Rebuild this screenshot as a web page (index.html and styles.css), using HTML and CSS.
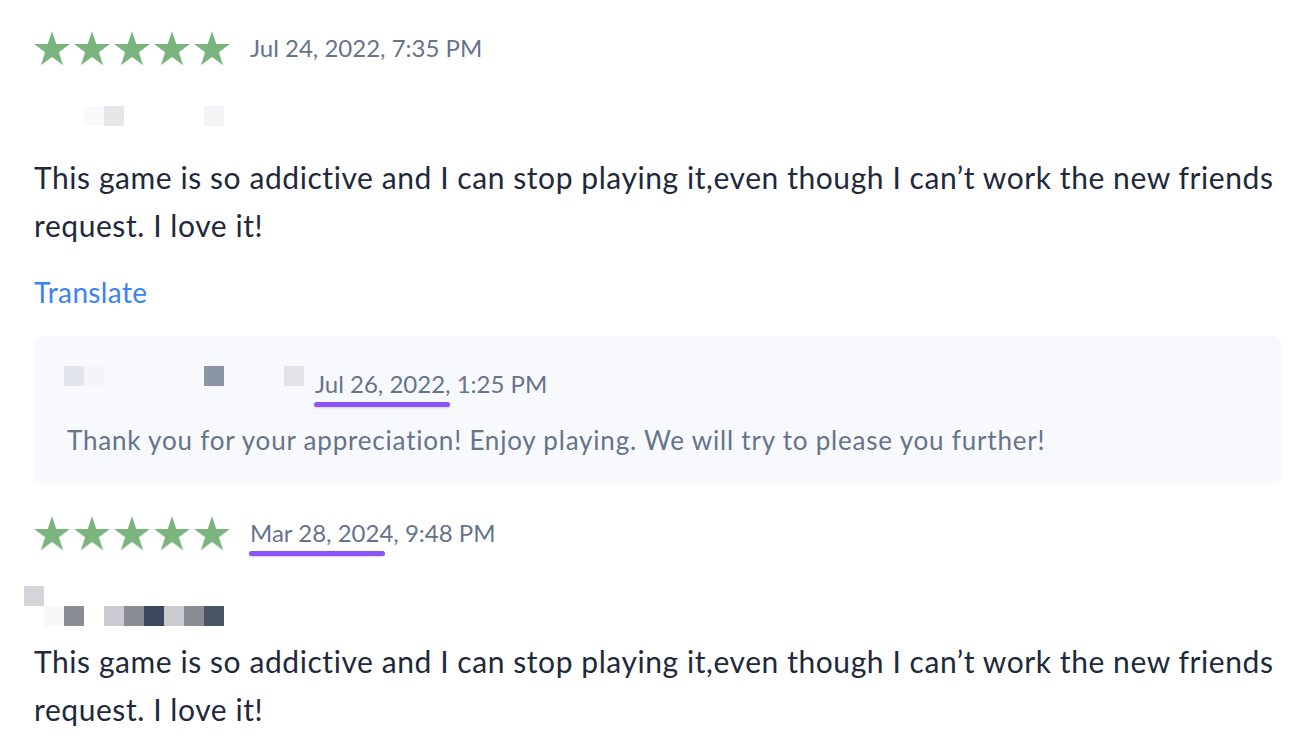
FILE: index.html
```html
<!DOCTYPE html>
<html lang="en">
<head>
<meta charset="utf-8">
<title>Reviews</title>
<link rel="stylesheet" href="styles.css">
</head>
<body>
<div class="page">
  <article class="review review-first">
    <div class="review-head">
      <div class="stars">
        <svg class="star" viewBox="0 0 36 35"><polygon points="18,0 22.24,13.06 35.98,13.06 24.87,21.13 29.11,34.19 18,26.12 6.89,34.19 11.13,21.13 0.02,13.06 13.76,13.06"/></svg>
        <svg class="star" viewBox="0 0 36 35"><polygon points="18,0 22.24,13.06 35.98,13.06 24.87,21.13 29.11,34.19 18,26.12 6.89,34.19 11.13,21.13 0.02,13.06 13.76,13.06"/></svg>
        <svg class="star" viewBox="0 0 36 35"><polygon points="18,0 22.24,13.06 35.98,13.06 24.87,21.13 29.11,34.19 18,26.12 6.89,34.19 11.13,21.13 0.02,13.06 13.76,13.06"/></svg>
        <svg class="star" viewBox="0 0 36 35"><polygon points="18,0 22.24,13.06 35.98,13.06 24.87,21.13 29.11,34.19 18,26.12 6.89,34.19 11.13,21.13 0.02,13.06 13.76,13.06"/></svg>
        <svg class="star" viewBox="0 0 36 35"><polygon points="18,0 22.24,13.06 35.98,13.06 24.87,21.13 29.11,34.19 18,26.12 6.89,34.19 11.13,21.13 0.02,13.06 13.76,13.06"/></svg>
      </div>
      <span class="date">Jul 24, 2022, 7:35 PM</span>
    </div>
    <div class="mosaic mosaic-one">
      <i class="cell m-a c3"></i><i class="cell m-b c4"></i><i class="cell m-c c9"></i>
    </div>
    <p class="review-text">This game is so addictive and I can stop playing it,even though I can’t work the new friends request. I love it!</p>
    <a class="translate" href="#">Translate</a>
    <div class="reply">
      <div class="reply-head">
        <div class="mosaic mosaic-reply">
          <i class="cell m-d c0"></i><i class="cell m-e c1"></i><i class="cell m-f c7"></i><i class="cell m-g c11"></i>
        </div>
        <span class="date reply-date"><span class="mark">Jul 26, 2022</span>, 1:25 PM</span>
      </div>
      <p class="reply-text">Thank you for your appreciation! Enjoy playing. We will try to please you further!</p>
    </div>
  </article>

  <article class="review review-second">
    <div class="review-head">
      <div class="stars">
        <svg class="star" viewBox="0 0 36 35"><polygon points="18,0 22.24,13.06 35.98,13.06 24.87,21.13 29.11,34.19 18,26.12 6.89,34.19 11.13,21.13 0.02,13.06 13.76,13.06"/></svg>
        <svg class="star" viewBox="0 0 36 35"><polygon points="18,0 22.24,13.06 35.98,13.06 24.87,21.13 29.11,34.19 18,26.12 6.89,34.19 11.13,21.13 0.02,13.06 13.76,13.06"/></svg>
        <svg class="star" viewBox="0 0 36 35"><polygon points="18,0 22.24,13.06 35.98,13.06 24.87,21.13 29.11,34.19 18,26.12 6.89,34.19 11.13,21.13 0.02,13.06 13.76,13.06"/></svg>
        <svg class="star" viewBox="0 0 36 35"><polygon points="18,0 22.24,13.06 35.98,13.06 24.87,21.13 29.11,34.19 18,26.12 6.89,34.19 11.13,21.13 0.02,13.06 13.76,13.06"/></svg>
        <svg class="star" viewBox="0 0 36 35"><polygon points="18,0 22.24,13.06 35.98,13.06 24.87,21.13 29.11,34.19 18,26.12 6.89,34.19 11.13,21.13 0.02,13.06 13.76,13.06"/></svg>
      </div>
      <span class="date"><span class="mark">Mar 28, 2024</span>, 9:48 PM</span>
    </div>
    <div class="mosaic mosaic-two">
      <i class="cell m-h c0 r0"></i>
      <i class="cell m-i c1 r1"></i><i class="cell m-j c2 r1"></i>
      <i class="cell m-k c4 r1"></i><i class="cell m-j c5 r1"></i><i class="cell m-l c6 r1"></i>
      <i class="cell m-k c7 r1"></i><i class="cell m-j c8 r1"></i><i class="cell m-m c9 r1"></i>
    </div>
    <p class="review-text">This game is so addictive and I can stop playing it,even though I can’t work the new friends request. I love it!</p>
  </article>
</div>
</body>
</html>
```
FILE: styles.css
```css
* { box-sizing: border-box; }
html, body { margin: 0; padding: 0; background: #ffffff; }
body {
  font-family: Lato, "Noto Sans", "Liberation Sans", sans-serif;
  color: #1e293b;
  overflow: hidden;
}
.page {
  width: 1312px;
  height: 750px;
  padding: 28px 30px 0 34px;
}
.review-head {
  display: flex;
  align-items: center;
  height: 40px;
  gap: 20px;
}
.stars {
  display: flex;
  gap: 4px;
}
.star {
  width: 36px;
  height: 35px;
  fill: #7ab57f;
  display: block;
}
.date {
  font-size: 24px;
  color: #64748b;
  line-height: 28px;
  white-space: nowrap;
}
.mark {
  position: relative;
}
.mark::after {
  content: "";
  position: absolute;
  left: -1px;
  width: 136px;
  bottom: -9px;
  height: 5px;
  border-radius: 3px;
  background: #8b55f5;
  box-shadow: 0 1px 2px rgba(139, 85, 245, 0.25);
}
.mosaic {
  display: grid;
  grid-template-columns: repeat(12, 20px);
  grid-auto-rows: 20px;
  margin-left: -10px;
}
.mosaic-reply { margin-left: 0; }
.cell { display: block; grid-row: 1; }
.c0 { grid-column: 1; } .c1 { grid-column: 2; } .c2 { grid-column: 3; }
.c3 { grid-column: 4; } .c4 { grid-column: 5; } .c5 { grid-column: 6; }
.c6 { grid-column: 7; } .c7 { grid-column: 8; } .c8 { grid-column: 9; }
.c9 { grid-column: 10; } .c11 { grid-column: 12; }
.r0 { grid-row: 1; } .r1 { grid-row: 2; }
.m-a { background: #f8f9fb; }
.m-b { background: #e6e7ea; }
.m-c { background: #f2f3f5; }
.m-d { background: #e1e3ea; }
.m-e { background: #f4f5f8; }
.m-f { background: #8a95a5; }
.m-g { background: #e2e3e8; }
.m-h { background: #d4d5da; }
.m-i { background: #f7f7f8; }
.m-j { background: #898d96; }
.m-k { background: #cbccd1; }
.m-l { background: #3b465f; }
.m-m { background: #4a5568; }

.mosaic-one { margin-top: 38px; }
.review-text {
  margin: 27px 0 0;
  font-size: 30px;
  letter-spacing: 0.57px;
  line-height: 48px;
  color: #1e293b;
}
.translate {
  display: block;
  margin-top: 25px;
  font-size: 28px;
  letter-spacing: 0.35px;
  line-height: 36px;
  color: #3b82f6;
  text-decoration: none;
}
.reply {
  margin-top: 26px;
  height: 148px;
  background: #f7f9fc;
  border-radius: 10px;
  padding: 30px 30px 0 30px;
}
.reply-head {
  display: flex;
  align-items: flex-start;
  gap: 11px;
}
.reply-date { margin-top: 4px; }
.reply-text {
  margin: 24px 0 0 3px;
  font-size: 26px;
  letter-spacing: 0.8px;
  line-height: 36px;
  color: #64748b;
}
.review-second .review-head { margin-top: 29px; }
.mosaic-two { margin-top: 33px; }
.review-second .review-text { margin-top: 11px; }
```
